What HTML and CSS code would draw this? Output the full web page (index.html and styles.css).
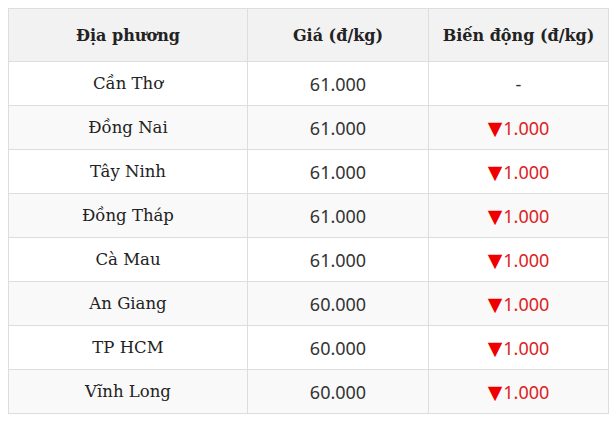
FILE: index.html
```html
<!DOCTYPE html>
<html lang="vi">
<head>
<meta charset="utf-8">
<link rel="stylesheet" href="styles.css">
</head>
<body>
<table class="price-table">
  <colgroup>
    <col class="c1"><col class="c2"><col class="c3">
  </colgroup>
  <thead>
    <tr><th>Địa phương</th><th>Giá (đ/kg)</th><th>Biến động (đ/kg)</th></tr>
  </thead>
  <tbody>
    <tr><td class="place">Cần Thơ</td><td class="num">61.000</td><td class="num">-</td></tr>
    <tr><td class="place">Đồng Nai</td><td class="num">61.000</td><td class="num down"><span class="tri">▼</span>1.000</td></tr>
    <tr><td class="place">Tây Ninh</td><td class="num">61.000</td><td class="num down"><span class="tri">▼</span>1.000</td></tr>
    <tr><td class="place">Đồng Tháp</td><td class="num">61.000</td><td class="num down"><span class="tri">▼</span>1.000</td></tr>
    <tr><td class="place">Cà Mau</td><td class="num">61.000</td><td class="num down"><span class="tri">▼</span>1.000</td></tr>
    <tr><td class="place">An Giang</td><td class="num">60.000</td><td class="num down"><span class="tri">▼</span>1.000</td></tr>
    <tr><td class="place">TP HCM</td><td class="num">60.000</td><td class="num down"><span class="tri">▼</span>1.000</td></tr>
    <tr><td class="place">Vĩnh Long</td><td class="num">60.000</td><td class="num down"><span class="tri">▼</span>1.000</td></tr>
  </tbody>
</table>
</body>
</html>
```
FILE: styles.css
```css
html, body {
  margin: 0;
  padding: 0;
  background: #fff;
}
body {
  padding: 8px;
}
.price-table {
  border-collapse: collapse;
  width: 600px;
  table-layout: fixed;
  color: #222;
}
.c1 { width: 239px; }
.c2 { width: 181px; }
.c3 { width: 180px; }
.price-table th,
.price-table td {
  border: 1px solid #dddddd;
  text-align: center;
  padding: 0;
}
.price-table th {
  height: 52px;
  background: #f2f2f2;
  font-family: "DejaVu Serif", "Liberation Serif", serif;
  font-weight: bold;
  font-size: 16px;
}
.price-table td {
  height: 43px;
}
.price-table tbody tr:nth-child(even) td {
  background: #f9f9f9;
}
.place {
  font-family: "DejaVu Serif", "Liberation Serif", serif;
  font-size: 16.5px;
}
.num {
  font-family: "Noto Sans", "Open Sans", sans-serif;
  font-size: 18px;
  color: #333;
}
.down {
  color: #dd2222;
}
.tri {
  color: #ee0000;
  font-size: 19px;
  font-family: "DejaVu Sans", sans-serif;
  margin-right: 1px;
}
```
